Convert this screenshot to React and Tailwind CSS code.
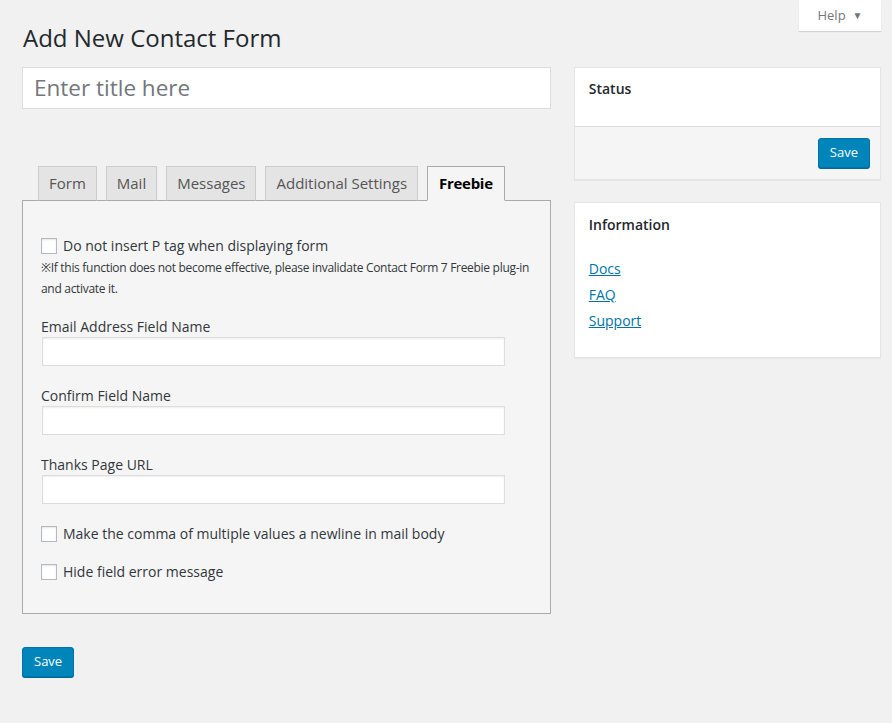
import React from "react";

const font = { fontFamily: '"Open Sans", "Noto Sans", sans-serif' };

const Checkbox = ({ label }) => (
  <label className="flex items-center gap-[6px] text-[14px] leading-[20px] text-[#32373c]">
    <span className="w-4 h-4 bg-white border border-[#b4b9be] shadow-[inset_0_1px_2px_rgba(0,0,0,0.1)] shrink-0" />
    {label}
  </label>
);

const Field = ({ label }) => (
  <div>
    <p className="text-[14px] text-[#32373c] leading-[20px]">{label}</p>
    <div className="ml-px w-[463px] h-[29px] bg-white border border-[#ddd] shadow-[inset_0_1px_2px_rgba(0,0,0,0.07)]" />
  </div>
);

const SaveButton = () => (
  <button className="h-[30px] px-[11px] bg-[#0085ba] border border-[#0073aa] rounded-[3px] text-white text-[13px] shadow-[0_1px_0_#006799]">
    Save
  </button>
);

const tabs = ["Form", "Mail", "Messages", "Additional Settings"];

export default function App() {
  return (
    <div className="min-h-screen bg-[#f1f1f1] relative" style={font}>
      {/* Help tab */}
      <div className="absolute right-[11px] top-0 w-[82px] h-[31px] bg-white shadow-[0_1px_1px_rgba(0,0,0,0.12)] flex items-center justify-center gap-[7px] text-[13px] text-[#72777c]">
        Help <span className="text-[10px]">▼</span>
      </div>

      <div className="pl-[22px] pr-[11px] pt-[22px] flex gap-[23px]">
        {/* Left column */}
        <div className="w-[530px]">
          <h1 className="text-[24px] text-[#23282d] leading-[31px] pl-px">Add New Contact Form</h1>
          <div className="mt-[14px] h-[42px] bg-white border border-[#ddd] flex items-center px-[11px] text-[22.5px] text-[#72777c]">
            Enter title here
          </div>

          {/* Tabs */}
          <div className="mt-[57px] flex items-end gap-[9px] pl-4 relative z-10">
            {tabs.map((t) => (
              <div key={t} className="h-[35px] px-[10px] bg-[#e4e4e4] border border-[#ccc] border-b-[#aaa] flex items-center text-[15px] text-[#555]">
                {t}
              </div>
            ))}
            <div className="h-[35px] px-[11px] bg-[#f5f5f5] border border-[#aaa] border-b-[#f5f5f5] flex items-center text-[15px] font-bold text-[#000] tracking-[-0.3px]">
              Freebie
            </div>
          </div>
          <div className="-mt-px bg-[#f5f5f5] border border-[#aaa] h-[414px] px-[18px] pt-[35px]">
            <Checkbox label="Do not insert P tag when displaying form" />
            <p className="mt-[1px] text-[12px] leading-[21px] text-[#32373c] tracking-[-0.3px]">
              ※If this function does not become effective, please invalidate Contact Form 7 Freebie{" "}
              <span className="whitespace-nowrap">plug-in</span> and activate it.
            </p>
            <div className="mt-[18px] flex flex-col gap-[20px]">
              <Field label="Email Address Field Name" />
              <Field label="Confirm Field Name" />
              <Field label="Thanks Page URL" />
            </div>
            <div className="mt-[20px] flex flex-col gap-[18px]">
              <Checkbox label="Make the comma of multiple values a newline in mail body" />
              <Checkbox label="Hide field error message" />
            </div>
          </div>
          <div className="mt-[33px]">
            <SaveButton />
          </div>
        </div>

        {/* Right column */}
        <div className="w-[308px] pt-[45px] flex flex-col gap-[22px]">
          <div className="bg-white border border-[#e5e5e5] shadow-[0_1px_1px_rgba(0,0,0,0.04)]">
            <div className="h-[58px] px-[14px] pt-[10px] text-[14px] font-semibold text-[#23282d]">Status</div>
            <div className="h-[53px] bg-[#f5f5f5] border-t border-[#ddd] flex items-center justify-end pr-[10px]">
              <SaveButton />
            </div>
          </div>
          <div className="bg-white border border-[#e5e5e5] shadow-[0_1px_1px_rgba(0,0,0,0.04)] h-[156px] px-[14px] pt-[11px]">
            <p className="text-[14px] font-semibold text-[#23282d]">Information</p>
            <div className="mt-[24px] flex flex-col gap-[6px] text-[14px] leading-[20px]">
              <a className="text-[#0073aa] underline w-fit">Docs</a>
              <a className="text-[#0073aa] underline w-fit">FAQ</a>
              <a className="text-[#0073aa] underline w-fit">Support</a>
            </div>
          </div>
        </div>
      </div>
    </div>
  );
}
